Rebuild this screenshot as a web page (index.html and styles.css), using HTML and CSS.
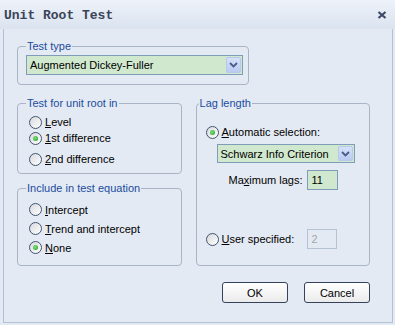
FILE: index.html
```html
<!DOCTYPE html>
<html>
<head>
  <meta name="viewport" content="width=device-width, initial-scale=1">
  <link rel="stylesheet" href="styles.css">
</head>
<body>
  <div class="window">
    <div class="titlebar">
      <span class="title">Unit Root Test</span>
      <svg class="close" width="10" height="8" viewBox="0 0 10 8">
        <path d="M1.5 1 L8.5 7 M8.5 1 L1.5 7" stroke="#3b4866" stroke-width="2.2" fill="none"/>
      </svg>
    </div>

    <div class="content">
      <fieldset class="group test-type">
        <legend>Test type</legend>
        <div class="combo wide">
          <span class="combo-text">Augmented Dickey-Fuller</span>
          <span class="combo-btn">
            <svg width="9" height="6" viewBox="0 0 9 6"><path d="M1 1 L4.5 4.5 L8 1" stroke="#4a5c86" stroke-width="1.8" fill="none"/></svg>
          </span>
        </div>
      </fieldset>

      <div class="columns">
        <div class="left">
          <fieldset class="group unit-root">
            <legend>Test for unit root in</legend>
            <div class="radio"><span class="dot"></span><span><u>L</u>evel</span></div>
            <div class="radio"><span class="dot on"></span><span><u>1</u>st difference</span></div>
            <div class="radio spaced"><span class="dot"></span><span><u>2</u>nd difference</span></div>
          </fieldset>

          <fieldset class="group include">
            <legend>Include in test equation</legend>
            <div class="radio"><span class="dot"></span><span><u>I</u>ntercept</span></div>
            <div class="radio"><span class="dot"></span><span><u>T</u>rend and intercept</span></div>
            <div class="radio"><span class="dot on"></span><span><u>N</u>one</span></div>
          </fieldset>
        </div>

        <fieldset class="group lag">
          <legend>Lag length</legend>
          <div class="radio"><span class="dot on"></span><span><u>A</u>utomatic selection:</span></div>
          <div class="combo narrow">
            <span class="combo-text">Schwarz Info Criterion</span>
            <span class="combo-btn">
              <svg width="9" height="6" viewBox="0 0 9 6"><path d="M1 1 L4.5 4.5 L8 1" stroke="#4a5c86" stroke-width="1.8" fill="none"/></svg>
            </span>
          </div>
          <div class="lag-row">
            <span class="lag-label">Ma<u>x</u>imum lags:</span>
            <span class="field">11</span>
          </div>
          <div class="radio user">
            <span class="dot"></span>
            <span class="user-label"><u>U</u>ser specified:</span>
            <span class="field disabled">2</span>
          </div>
        </fieldset>
      </div>

      <div class="buttons">
        <button class="btn">OK</button>
        <button class="btn">Cancel</button>
      </div>
    </div>
  </div>
</body>
</html>
```

FILE: styles.css
```css
body {
  margin: 0;
  font-family: "Liberation Sans", Arial, sans-serif;
  font-size: 11px;
  color: #000;
  background-color: #e4eaf3;
}
.window {
  width: 395px;
  height: 325px;
  display: flex;
  flex-direction: column;
  background-color: #e4eaf3;
}
.titlebar {
  height: 29px;
  flex-shrink: 0;
  display: flex;
  align-items: center;
  justify-content: space-between;
  padding: 0 8px 0 4px;
  box-sizing: border-box;
  background: linear-gradient(#eef2f9, #dae3ef);
}
.title {
  font-family: "Liberation Mono", "Courier New", monospace;
  font-weight: bold;
  font-size: 13px;
  color: #3a4458;
  padding-top: 1px;
}
.close {
  display: block;
}
.content {
  flex: 1;
  margin: 0 2px 2px 3px;
  border: 1px solid #b3c1d6;
  border-top: none;
  padding: 10px 22px 0 13px;
  background-color: #e4eaf3;
}
.group {
  margin: 0;
  border: 1px solid #a9b4c6;
  border-radius: 4px;
  padding: 0 4px 0 8px;
  min-inline-size: 0;
  box-sizing: border-box;
}
.group legend {
  padding: 0 1px;
  line-height: 14px;
  color: #1a4c9e;
}
.test-type {
  width: 232px;
  padding-top: 2px;
  padding-bottom: 9px;
}
.combo {
  display: flex;
  align-items: stretch;
  border: 1px solid #7f9db9;
  background-color: #d0e8ce;
  box-sizing: border-box;
}
.combo.wide {
  width: 217px;
  height: 20px;
}
.combo.narrow {
  width: 138px;
  height: 19px;
  margin: 4px 0 0 18px;
}
.combo-text {
  flex: 1;
  padding-left: 3px;
  display: flex;
  align-items: center;
}
.combo-btn {
  width: 15px;
  margin: 1px;
  border: 1px solid #b7c8ec;
  border-radius: 2px;
  background: linear-gradient(#d6e1fa, #b9cbf1);
  display: flex;
  align-items: center;
  justify-content: center;
  box-sizing: border-box;
}
.columns {
  display: flex;
  gap: 14px;
  margin-top: 11px;
}
.left {
  width: 167px;
  display: flex;
  flex-direction: column;
}
.unit-root {
  padding-top: 4px;
  padding-bottom: 6px;
}
.unit-root .radio {
  height: 16px;
}
.unit-root .radio.spaced {
  margin-top: 5px;
}
.include {
  margin-top: 7px;
  padding-top: 5px;
  padding-bottom: 8px;
}
.include .radio {
  height: 19px;
}
.radio {
  display: flex;
  align-items: center;
  gap: 3px;
  margin-left: 3px;
}
.dot {
  width: 13px;
  height: 13px;
  box-sizing: border-box;
  border: 1px solid #40536f;
  border-radius: 50%;
  background: linear-gradient(135deg, #d7d9dd, #ffffff);
  display: flex;
  align-items: center;
  justify-content: center;
  flex-shrink: 0;
}
.dot.on::after {
  content: "";
  width: 5px;
  height: 5px;
  border-radius: 50%;
  background: radial-gradient(circle at 40% 40%, #7fe27f, #1c9b1c);
}
.lag {
  width: 177px;
  padding: 14px 4px 16px 2px;
  display: flex;
  flex-direction: column;
}
.lag .radio {
  margin-left: 7px;
  height: 16px;
}
.lag-row {
  display: flex;
  align-items: center;
  margin-top: 7px;
  padding-left: 30px;
}
.lag-label {
  width: 78px;
}
.field {
  width: 31px;
  height: 20px;
  box-sizing: border-box;
  border: 1px solid #7f9db9;
  background-color: #d0e8ce;
  padding-left: 4px;
  display: flex;
  align-items: center;
}
.field.disabled {
  width: 30px;
  border-color: #b5c2d4;
  background-color: #e4eaf3;
  color: #a6a6a6;
}
.lag .radio.user {
  margin-top: auto;
  height: 20px;
  gap: 0;
}
.user .dot {
  margin-right: 3px;
}
.user-label {
  width: 85px;
}
.buttons {
  display: flex;
  justify-content: flex-end;
  gap: 16px;
  margin-top: 16px;
}
.btn {
  width: 66px;
  height: 21px;
  padding: 0;
  font-family: "Liberation Sans", Arial, sans-serif;
  font-size: 11px;
  color: #000;
  border: 1px solid #34425c;
  border-radius: 3px;
  background: linear-gradient(#ffffff, #ebebeb);
}
```
